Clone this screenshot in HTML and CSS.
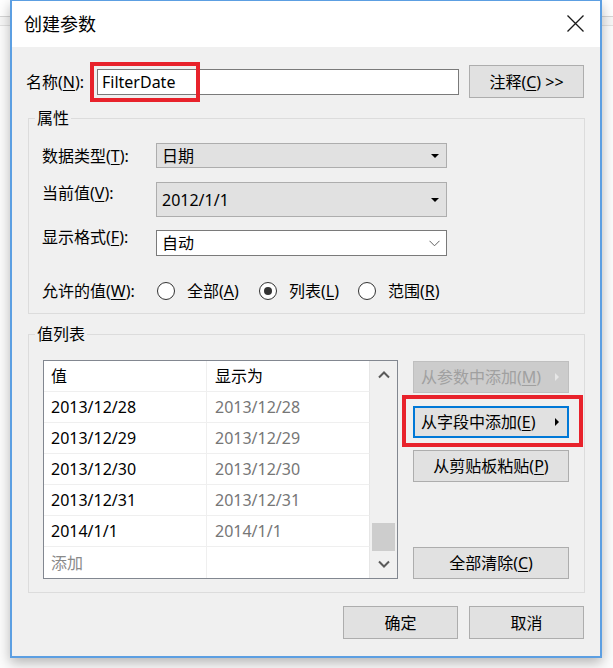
FILE: index.html
```html
<!DOCTYPE html>
<html lang="zh-CN">
<head>
    <meta charset="UTF-8">
    <title>创建参数</title>
    <link rel="stylesheet" href="styles.css">
</head>
<body>
    <div class="dialog">
        <div class="titlebar">
            <span class="title">创建参数</span>
            <svg class="close" width="17" height="17" viewBox="0 0 17 17">
                <path d="M0.5 0.5L16.5 16.5M16.5 0.5L0.5 16.5" stroke="#1a1a1a" stroke-width="1.3" fill="none"/>
            </svg>
        </div>

        <div class="content">
            <div class="name-row">
                <span class="name-label">名称(<u>N</u>):</span>
                <div class="name-field">
                    <div class="textbox">FilterDate</div>
                    <div class="mark mark-name"></div>
                </div>
                <div class="btn btn-note">注释(<u>C</u>) &gt;&gt;</div>
            </div>

            <fieldset class="group group-props">
                <legend>属性</legend>
                <div class="props">
                    <div class="prop-row">
                        <span class="prop-label">数据类型(<u>T</u>):</span>
                        <div class="combo combo-ro combo-type"><span>日期</span><span class="tri"></span></div>
                    </div>
                    <div class="prop-row">
                        <span class="prop-label">当前值(<u>V</u>):</span>
                        <div class="combo combo-ro combo-current"><span>2012/1/1</span><span class="tri"></span></div>
                    </div>
                    <div class="prop-row">
                        <span class="prop-label">显示格式(<u>F</u>):</span>
                        <div class="combo combo-edit">
                            <span>自动</span>
                            <svg width="11" height="7" viewBox="0 0 11 7"><path d="M0.5 0.8L5.5 5.8L10.5 0.8" stroke="#606060" stroke-width="1" fill="none"/></svg>
                        </div>
                    </div>
                    <div class="prop-row radio-row">
                        <span class="prop-label">允许的值(<u>W</u>):</span>
                        <div class="option opt-all"><span class="radio"></span>全部(<u>A</u>)</div>
                        <div class="option opt-list"><span class="radio checked"></span>列表(<u>L</u>)</div>
                        <div class="option"><span class="radio"></span>范围(<u>R</u>)</div>
                    </div>
                </div>
            </fieldset>

            <fieldset class="group group-values">
                <legend>值列表</legend>
                <div class="values">
                    <div class="list">
                        <div class="list-grid">
                            <div class="cell">值</div>
                            <div class="cell">显示为</div>
                            <div class="cell">2013/12/28</div>
                            <div class="cell shown">2013/12/28</div>
                            <div class="cell">2013/12/29</div>
                            <div class="cell shown">2013/12/29</div>
                            <div class="cell">2013/12/30</div>
                            <div class="cell shown">2013/12/30</div>
                            <div class="cell">2013/12/31</div>
                            <div class="cell shown">2013/12/31</div>
                            <div class="cell">2014/1/1</div>
                            <div class="cell shown">2014/1/1</div>
                            <div class="cell add">添加</div>
                            <div class="cell"></div>
                        </div>
                        <div class="scrollbar">
                            <svg class="arrow" width="12" height="8" viewBox="0 0 12 8"><path d="M1 6.5L6 1.5L11 6.5" stroke="#5a5a5a" stroke-width="2" fill="none"/></svg>
                            <div class="track"><div class="thumb"></div></div>
                            <svg class="arrow" width="12" height="8" viewBox="0 0 12 8"><path d="M1 1.5L6 6.5L11 1.5" stroke="#5a5a5a" stroke-width="2" fill="none"/></svg>
                        </div>
                    </div>
                    <div class="actions">
                        <div class="btn btn-side disabled"><span>从参数中添加(<u>M</u>)</span><span class="more"></span></div>
                        <div class="field-wrap">
                            <div class="btn btn-side focused"><span>从字段中添加(<u>E</u>)</span><span class="more"></span></div>
                            <div class="mark mark-field"></div>
                        </div>
                        <div class="btn btn-side btn-center">从剪贴板粘贴(<u>P</u>)</div>
                        <div class="btn btn-side btn-center btn-clear">全部清除(<u>C</u>)</div>
                    </div>
                </div>
            </fieldset>

            <div class="footer">
                <div class="btn btn-footer">确定</div>
                <div class="btn btn-footer">取消</div>
            </div>
        </div>
    </div>
</body>
</html>
```

FILE: styles.css
```css
body {
    margin: 0;
    width: 613px;
    height: 668px;
    overflow: hidden;
    font-family: "Noto Sans", "Noto Sans CJK SC", sans-serif;
    font-size: 16px;
    color: #000;
    background:
        linear-gradient(#fff 0, #fff 16px, #d6d6d6 16px, #d6d6d6 17px, #f7f7f7 17px, #f7f7f7 25px, #e2e2e2 25px, #e2e2e2 26px, #fcfcfc 26px);
}

u {
    text-decoration: underline;
    text-underline-offset: 2px;
}

.dialog {
    margin-left: 10px;
    width: 588px;
    height: 655px;
    border: 2px solid #5c9fe2;
    border-top-width: 1px;
    background-color: #f0f0f0;
    box-shadow: 0 5px 12px rgba(0, 0, 0, 0.28);
}

.titlebar {
    height: 46px;
    background-color: #fff;
    display: flex;
    align-items: center;
    justify-content: space-between;
    padding: 0 16px 0 12px;
}

.title {
    font-size: 18px;
    line-height: 24px;
    margin-top: -1px;
}

.close {
    margin-top: -2px;
}

.content {
    padding: 18px 15px 0 14px;
}

/* name row */
.name-row {
    display: flex;
    align-items: center;
    height: 33px;
}

.name-label {
    width: 71px;
    line-height: 20px;
}

.name-field {
    position: relative;
    width: 362px;
}

.textbox {
    height: 24px;
    line-height: 24px;
    background: #fff;
    border: 1px solid #7a7a7a;
    padding-left: 4px;
}

.mark {
    position: absolute;
    border: 4px solid #e8222b;
}

.mark-name {
    left: -7px;
    top: -7px;
    width: 102px;
    height: 32px;
}

.btn {
    box-sizing: border-box;
    background-color: #e1e1e1;
    border: 1px solid #adadad;
    display: flex;
    align-items: center;
    justify-content: center;
    line-height: 20px;
}

.btn-note {
    margin-left: 10px;
    width: 115px;
    height: 33px;
}

/* group boxes */
.group {
    margin: 0 0 0 2px;
    width: 555px;
    padding: 0;
    border: 1px solid #dcdcdc;
}

.group legend {
    margin-left: 6px;
    padding: 0 2px;
    line-height: 20px;
}

.group-props {
    margin-top: 10px;
}

.props {
    padding: 15px 0 10px 13px;
    display: flex;
    flex-direction: column;
}

.prop-row {
    display: flex;
    align-items: center;
}

.prop-label {
    width: 114px;
    line-height: 20px;
}

.combo {
    box-sizing: border-box;
    width: 291px;
    display: flex;
    align-items: center;
    justify-content: space-between;
    padding: 0 6px 0 5px;
    border: 1px solid #adadad;
    line-height: 20px;
}

.combo-ro {
    background-color: #e1e1e1;
}

.combo-type {
    height: 25px;
}

.combo-current {
    height: 35px;
    margin-top: 14px;
}

.combo-edit {
    height: 26px;
    margin-top: 13px;
    background-color: #fff;
    border-color: #7a7a7a;
}

.tri {
    width: 0;
    height: 0;
    border-left: 4px solid transparent;
    border-right: 4px solid transparent;
    border-top: 4px solid #000;
    margin-right: 1px;
}

.radio-row {
    height: 24px;
    margin-top: 23px;
}

.option {
    display: flex;
    align-items: center;
    line-height: 20px;
}

.opt-all {
    width: 102px;
}

.opt-list {
    width: 99px;
}

.radio {
    box-sizing: border-box;
    width: 18px;
    height: 18px;
    border-radius: 50%;
    border: 1px solid #333;
    background: #fff;
    margin: 0 12px 0 1px;
    display: flex;
    align-items: center;
    justify-content: center;
}

.radio.checked::after {
    content: "";
    width: 8px;
    height: 8px;
    border-radius: 50%;
    background: #333;
}

/* value list */
.group-values {
    margin-top: 10px;
}

.values {
    display: flex;
    padding: 16px 0 13px 14px;
}

.list {
    display: flex;
    width: 353px;
    border: 1px solid #828790;
    background: #fff;
}

.list-grid {
    display: grid;
    grid-template-columns: 163px 163px;
    grid-auto-rows: 31px;
}

.cell {
    box-sizing: border-box;
    display: flex;
    align-items: center;
    padding-left: 7px;
    border-bottom: 1px solid #efefef;
    line-height: 20px;
}

.cell:nth-child(odd) {
    border-right: 1px solid #efefef;
}

.cell:nth-child(even) {
    padding-left: 8px;
    border-right: 1px solid #e6e6e6;
}

.cell:nth-last-child(-n+2) {
    border-bottom: none;
}

.shown {
    color: #767676;
}

.add {
    color: #8a8a8a;
}

.scrollbar {
    width: 27px;
    background: #f0f0f0;
    display: flex;
    flex-direction: column;
    align-items: center;
}

.arrow {
    flex: none;
    margin: 10px 0;
}

.track {
    flex: 1;
    width: 100%;
    display: flex;
    flex-direction: column;
    justify-content: flex-end;
    align-items: center;
}

.thumb {
    width: 23px;
    height: 28px;
    background: #cdcdcd;
    margin-bottom: -1px;
}

.actions {
    margin-left: 15px;
    width: 156px;
    display: flex;
    flex-direction: column;
}

.btn-side {
    height: 32px;
    justify-content: space-between;
    padding: 0 9px 0 7px;
}

.btn-center {
    justify-content: center;
    padding: 0;
}

.disabled {
    margin-top: 1px;
    background-color: #cccccc;
    border-color: #bfbfbf;
    color: #a0a0a0;
}

.more {
    width: 0;
    height: 0;
    border-top: 4px solid transparent;
    border-bottom: 4px solid transparent;
    border-left: 4px solid #000;
}

.disabled .more {
    border-left-color: #e6e6e6;
}

.field-wrap {
    position: relative;
    margin-top: 13px;
}

.focused {
    border: 2px solid #0078d7;
    padding: 0 8px 0 6px;
}

.mark-field {
    left: -11px;
    top: -11px;
    width: 173px;
    height: 44px;
}

.field-wrap + .btn-center {
    margin-top: 12px;
}

.btn-clear {
    margin-top: auto;
}

/* footer */
.footer {
    display: flex;
    justify-content: flex-end;
    gap: 11px;
    margin-top: 13px;
    padding-right: 1px;
}

.btn-footer {
    width: 115px;
    height: 33px;
}
```
